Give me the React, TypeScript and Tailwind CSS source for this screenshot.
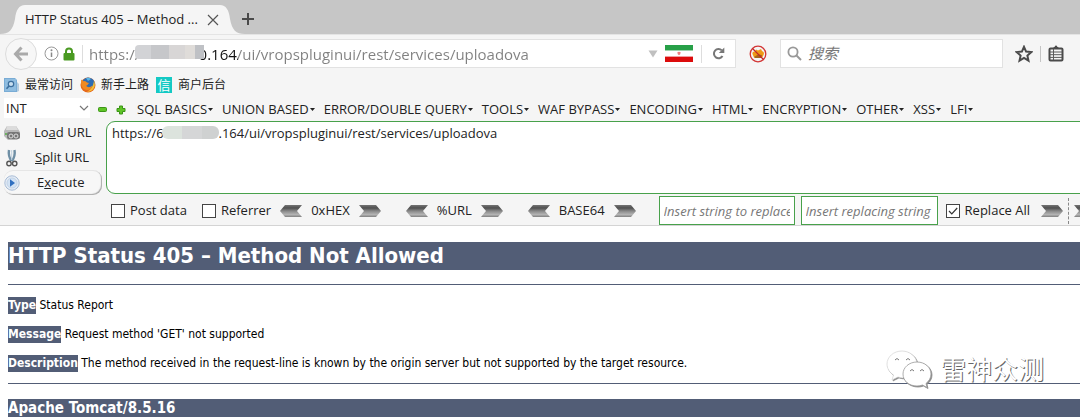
import React, { useState } from "react";

const menus = [
  "SQL BASICS",
  "UNION BASED",
  "ERROR/DOUBLE QUERY",
  "TOOLS",
  "WAF BYPASS",
  "ENCODING",
  "HTML",
  "ENCRYPTION",
  "OTHER",
  "XSS",
  "LFI",
];

function Chevron({ id, left = false }: { id: string; left?: boolean }) {
  return (
    <svg width="24" height="14" viewBox="0 0 24 14" className={left ? "-scale-x-100" : ""} aria-hidden="true">
      <defs>
        <linearGradient id={id} x1="0" y1="0" x2="0" y2="1">
          <stop offset="0" stopColor="#747474" />
          <stop offset="0.25" stopColor="#505050" />
          <stop offset="0.5" stopColor="#888" />
          <stop offset="0.8" stopColor="#b4b4b4" />
          <stop offset="1" stopColor="#808080" />
        </linearGradient>
      </defs>
      <path d="M1 1H18L23 7L18 13H1L6 7Z" fill={`url(#${id})`} />
    </svg>
  );
}

function Converter({ label, id }: { label: string; id: string }) {
  return (
    <div className="flex shrink-0 items-center">
      <button aria-label={`Decode ${label}`}>
        <Chevron id={`${id}-l`} left />
      </button>
      <span className="px-2 text-center text-[13px]">{label}</span>
      <button aria-label={`Encode ${label}`}>
        <Chevron id={`${id}-r`} />
      </button>
    </div>
  );
}

function Check({ label, checked = false }: { label: string; checked?: boolean }) {
  const [on, setOn] = useState(checked);
  return (
    <label className="flex shrink-0 items-center gap-[5px] whitespace-nowrap text-[13px]">
      <span className="relative flex size-[14px]">
        <input
          type="checkbox"
          checked={on}
          onChange={() => setOn(!on)}
          className="size-[14px] appearance-none border border-[#444] bg-white"
        />
        {on && (
          <svg viewBox="0 0 14 14" className="pointer-events-none absolute inset-0" aria-hidden="true">
            <path d="M3 7L5.8 9.8L11.2 4" fill="none" stroke="#333" strokeWidth="1.2" />
          </svg>
        )}
      </span>
      {label}
    </label>
  );
}

function TabEdge({ right = false }: { right?: boolean }) {
  return (
    <svg width="25" height="29" viewBox="0 0 25 29" className={right ? "-scale-x-100" : ""} aria-hidden="true">
      <path d="M0 29C9 29 13 25 15 14C16 5 19 0 25 0V29Z" fill="#f5f5f5" />
    </svg>
  );
}

function TabStrip() {
  return (
    <div className="flex h-[34px] items-end bg-[#c6c6c6]">
      <TabEdge />
      <div className="flex h-[29px] items-center gap-3 bg-[#f5f5f5] pr-px">
        <span className="w-[170px] text-[13px] whitespace-nowrap">HTTP Status 405 – Method ...</span>
        <button aria-label="Close tab">
          <svg width="12" height="12" viewBox="0 0 12 12" aria-hidden="true">
            <path d="M1 1L11 11M11 1L1 11" stroke="#555" strokeWidth="1.2" />
          </svg>
        </button>
      </div>
      <TabEdge right />
      <button aria-label="New tab" className="mb-2 -ml-1">
        <svg width="14" height="14" viewBox="0 0 14 14" aria-hidden="true">
          <path d="M7 1V13M1 7H13" stroke="#4a4a4a" strokeWidth="2" />
        </svg>
      </button>
    </div>
  );
}

function Flag() {
  return (
    <svg width="28" height="17" viewBox="0 0 28 17" className="shrink-0" aria-hidden="true">
      <rect width="28" height="17" fill="#fff" />
      <rect width="28" height="5" fill="#27a048" />
      <rect width="28" height="5" y="12" fill="#dc0c0c" />
      <path d="M0 5.5H28" stroke="#9fd3ad" />
      <path d="M0 11.5H28" stroke="#efa0a0" />
      <path d="M12.3 7.3Q14 6.3 15.7 7.3Q15.6 9.6 14 10.3Q12.4 9.6 12.3 7.3Z" fill="#ee7f7f" />
    </svg>
  );
}

function NavBar() {
  return (
    <div className="flex h-[38px] items-center border-t border-[#e4e4e4] pr-4 pl-[5px]">
      <button
        aria-label="Back"
        className="z-10 -mr-4 flex size-[32px] shrink-0 items-center justify-center rounded-full border border-[#dcdcdc] bg-[#f7f7f7]"
      >
        <svg width="16" height="16" viewBox="0 0 16 16" aria-hidden="true">
          <path d="M8.5 1.5L2.5 8L8.5 14.5M3 8H15" fill="none" stroke="#aaa" strokeWidth="3" />
        </svg>
      </button>
      <div className="flex h-[29px] min-w-0 flex-1 items-center border border-[#e2e2e2] bg-white pr-[10px] pl-[22px]">
        <svg width="15" height="15" viewBox="0 0 15 15" className="shrink-0" aria-hidden="true">
          <circle cx="7.5" cy="7.5" r="6.5" fill="none" stroke="#999" />
          <path d="M7.5 6.5V11" stroke="#888" strokeWidth="1.5" />
          <circle cx="7.5" cy="4.3" r="1" fill="#888" />
        </svg>
        <svg width="12" height="14" viewBox="0 0 12 14" className="ml-1 shrink-0" aria-hidden="true">
          <path d="M3 7V4.5A3 3 0 0 1 9 4.5V7" fill="none" stroke="#4a9a22" strokeWidth="2" />
          <rect x="0.5" y="6" width="11" height="7.5" rx="1" fill="#4a9a22" />
        </svg>
        <span className="ml-[7px] h-[18px] w-px shrink-0 bg-[#ddd]" />
        <div className="relative ml-[6px] min-w-0 flex-1">
          <input
            aria-label="Address"
            defaultValue="https://               0.164/ui/vropspluginui/rest/services/uploadova"
            className="block w-full bg-[linear-gradient(to_right,#808080_100px,#111_100px,#111_149px,#808080_149px)] bg-clip-text text-[15px] leading-5 text-transparent caret-black outline-none"
          />
          <span className="absolute top-[1px] left-[46px] h-[14px] w-[69px] rounded-l-sm bg-[linear-gradient(to_right,#d2d3d6_0_16px,#c6c7ca_16px_34px,#d8d6d6_34px_50px,#dfdcd9_50px_60px,#bfc1c5_60px)]" />
        </div>
        <button aria-label="Show history" className="mr-[7px]">
          <svg width="10" height="8" viewBox="0 0 10 8" aria-hidden="true">
            <path d="M0.5 0.5H9.5L5 7.5Z" fill="#c0c0c0" />
          </svg>
        </button>
        <Flag />
        <span className="ml-2 h-[18px] w-px bg-[#ddd]" />
        <button aria-label="Reload" className="ml-[10px]">
          <svg width="13" height="13" viewBox="0 0 13 13" aria-hidden="true">
            <path d="M10.5 9A4.6 4.6 0 1 1 9.8 3.4" fill="none" stroke="#777" strokeWidth="2" />
            <path d="M12.3 0.5V6H6.8Z" fill="#777" />
          </svg>
        </button>
      </div>
      <button aria-label="Blocked item" className="mx-[13px] shrink-0">
        <svg width="18" height="18" viewBox="0 0 18 18" aria-hidden="true">
          <path d="M3.5 9Q3 6 6 6.5L7 4.5L9 5.5L12 4L13 6Q16 7 14.5 10Q14 13 10 13L5 12.5Z" fill="#ef9a16" />
          <path d="M5 12L9 9.5L13 10L12 13H6Z" fill="#a8651b" />
          <circle cx="9" cy="9" r="7.8" fill="none" stroke="#d23434" strokeWidth="1.3" />
          <path d="M3.5 3.5L14.5 14.5" stroke="#c22828" strokeWidth="1.3" />
        </svg>
      </button>
      <label className="flex h-[29px] w-[223px] shrink-0 items-center gap-[6px] border border-[#e2e2e2] bg-white px-[6px]">
        <svg width="15" height="15" viewBox="0 0 15 15" className="shrink-0" aria-hidden="true">
          <circle cx="6" cy="6" r="4.6" fill="none" stroke="#999" strokeWidth="1.8" />
          <path d="M9.5 9.5L14 14" stroke="#999" strokeWidth="2" />
        </svg>
        <input
          aria-label="搜索"
          placeholder="搜索"
          className="w-full min-w-0 bg-transparent text-[15px] italic outline-none placeholder:text-[#777]"
        />
      </label>
      <button aria-label="Bookmark this page" className="ml-3 shrink-0">
        <svg width="18" height="18" viewBox="0 0 18 18" aria-hidden="true">
          <path
            d="M9 1.8L11.1 6.6L16.3 7.1L12.4 10.6L13.5 15.7L9 13L4.5 15.7L5.6 10.6L1.7 7.1L6.9 6.6Z"
            fill="none"
            stroke="#4a4a4a"
            strokeWidth="2"
          />
        </svg>
      </button>
      <span className="mx-[7px] h-[16px] w-px shrink-0 bg-[#c4c4c4]" />
      <button aria-label="Bookmarks list" className="shrink-0">
        <svg width="16" height="17" viewBox="0 0 16 17" aria-hidden="true">
          <rect x="1.5" y="3.5" width="13" height="12" rx="1" fill="#f5f5f5" stroke="#4a4a4a" strokeWidth="2" />
          <path d="M4.5 4L6 2H6.5Q8 -0.8 9.5 2H10L11.5 4Z" fill="#4a4a4a" />
          <path d="M5.5 4V15M2 7H14M2 9.7H14M2 12.4H14" stroke="#5a5a5a" />
        </svg>
      </button>
    </div>
  );
}

function BookmarksBar() {
  return (
    <nav className="flex h-[25px] items-center gap-[7px] pl-1 text-[12px]">
      <a href="#most-visited" className="flex items-center gap-[6px]">
        <svg width="15" height="16" viewBox="0 0 15 16" aria-hidden="true">
          <path d="M0 1H11L13 3V15H0Z" fill="#79acd5" />
          <path d="M13 5L15 7V14L13 15Z" fill="#b5cde0" />
          <rect x="1" y="2" width="11" height="12" fill="#8fbde0" />
          <circle cx="7" cy="7" r="2.7" fill="#c9e0f1" stroke="#3c6f9d" strokeWidth="1.2" />
          <path d="M5 9L2.5 11.8" stroke="#3c6f9d" strokeWidth="1.6" />
        </svg>
        最常访问
      </a>
      <a href="#getting-started" className="flex items-center gap-[5px]">
        <svg width="16" height="16" viewBox="0 0 16 16" aria-hidden="true">
          <circle cx="8" cy="8" r="7.5" fill="#e66a1c" />
          <path d="M3 3Q7 -1.5 12.5 2Q16 5.5 14 9Q11 12 7 10.5L4 6Z" fill="#2e6db4" />
          <path d="M6 1Q9 0 11 2L8 4Z" fill="#58b5e4" />
          <path d="M1 2.5L3.2 4.2Q5.3 3.8 7 5.5L9 6L7.5 8L6 9Q9 11.5 12.5 8.5Q11.5 13 7 13Q2 12.5 1.2 7Z" fill="#f08a22" />
          <path d="M14 4Q15.8 8 13.6 11.5Q11 15 7 14.8Q12.5 13 14 4Z" fill="#f5c338" />
        </svg>
        新手上路
      </a>
      <a href="#merchant" className="flex items-center gap-[6px]">
        <span className="flex size-4 items-center justify-center bg-[#14c9c4] text-[13px] leading-4 text-white">信</span>
        商户后台
      </a>
    </nav>
  );
}

function SidePanel() {
  return (
    <div className="flex w-[106px] shrink-0 flex-col pl-1 text-[13px]">
      <div className="relative w-[86px]">
        <select aria-label="Mode" className="block h-[20px] w-full appearance-none bg-white pl-[2px] leading-[20px]">
          <option>INT</option>
        </select>
        <svg
          width="10"
          height="6"
          viewBox="0 0 10 6"
          className="pointer-events-none absolute top-[7px] right-px"
          aria-hidden="true"
        >
          <path d="M1 1L5 5L9 1" fill="none" stroke="#777" strokeWidth="1.2" />
        </svg>
      </div>
      <button className="mt-[2px] flex h-[25px] items-center">
        <svg width="17" height="16" viewBox="0 0 17 16" aria-hidden="true">
          <path d="M3 1H12L16 7V12L13 15H4L0 11V6Z" fill="#b9b9b9" />
          <path d="M3 1H12L14 5H2Z" fill="#dcdcdc" />
          <rect x="3" y="7" width="13" height="7" rx="2" fill="#777" />
          <circle cx="7" cy="11" r="2" fill="none" stroke="#ddd" />
          <circle cx="12" cy="11" r="2" fill="none" stroke="#ddd" />
          <circle cx="2" cy="9" r="1" fill="#54ad45" />
        </svg>
        <span className="ml-[13px] whitespace-nowrap">
          Lo<u>a</u>d URL
        </span>
      </button>
      <button className="flex h-[25px] items-center">
        <svg width="16" height="18" viewBox="0 0 16 18" aria-hidden="true">
          <path d="M5 1Q4 7 7.5 12M10.5 1Q11.5 7 8 12" fill="none" stroke="#6f8fa5" strokeWidth="2.4" />
          <path d="M7.7 1V11" stroke="#bfd1de" />
          <circle cx="5" cy="14.5" r="2.2" fill="none" stroke="#555" strokeWidth="1.4" />
          <circle cx="10.7" cy="14.5" r="2.2" fill="none" stroke="#555" strokeWidth="1.4" />
        </svg>
        <span className="ml-[15px] whitespace-nowrap">
          <u>S</u>plit URL
        </span>
      </button>
      <button className="mr-1 flex h-[25px] items-center rounded-[9px] bg-[#f7f7f7] shadow-[inset_-1px_-1px_1px_#aaa,inset_0_1px_0_#e6e6e6]">
        <svg width="16" height="16" viewBox="0 0 16 16" aria-hidden="true">
          <circle cx="8" cy="8" r="7.2" fill="#e5ecf5" stroke="#a9bdd6" />
          <circle cx="8" cy="8" r="5" fill="#d2e2f4" stroke="#c2d3e7" />
          <path d="M6 4.2L11 8L6 11.8Z" fill="#2f6fc0" />
        </svg>
        <span className="ml-[17px]">
          E<u>x</u>ecute
        </span>
      </button>
    </div>
  );
}

function HackBar() {
  return (
    <section className="flex h-[129px] overflow-hidden border-b border-[#d4d4d4] pt-px">
      <SidePanel />
      <div className="flex min-w-0 flex-1 flex-col">
        <div className="flex h-[23px] shrink-0 items-center gap-[9px] text-[13px]">
          <div className="-ml-2 mr-[2px] flex w-[28px] shrink-0 items-center justify-between">
            <button aria-label="Remove">
              <svg width="9" height="5" viewBox="0 0 9 5" aria-hidden="true">
                <rect x="0.5" y="0.5" width="8" height="4" rx="1" fill="#5ec426" stroke="#3b9416" />
              </svg>
            </button>
            <button aria-label="Add">
              <svg width="10" height="10" viewBox="0 0 10 10" aria-hidden="true">
                <path d="M3.5 1H6.5V3.5H9V6.5H6.5V9H3.5V6.5H1V3.5H3.5Z" fill="#5ec426" stroke="#3b9416" />
              </svg>
            </button>
          </div>
          {menus.map((m) => (
            <button key={m} className="flex items-center gap-px whitespace-nowrap">
              {m}
              <svg width="5" height="3" viewBox="0 0 5 3" aria-hidden="true">
                <path d="M0 0H5L2.5 3Z" fill="#222" />
              </svg>
            </button>
          ))}
        </div>
        <div className="relative shrink-0">
          <textarea
            aria-label="Request URL"
            defaultValue="https://62              .164/ui/vropspluginui/rest/services/uploadova"
            className="-mr-4 block h-[73px] w-[calc(100%+16px)] resize-none rounded-[9px] border border-[#48a14b] bg-white px-[5px] py-[2px] text-[13px] leading-[18px] outline-none"
          />
          <span className="absolute top-[5px] left-[56px] h-[13px] w-[57px] rounded-md bg-[linear-gradient(to_right,#dce3dd_0_20px,#d5d6d7_20px_40px,#cfd1d1_40px)]" />
        </div>
        <div className="flex flex-1 items-center pt-[2px] pl-[5px] whitespace-nowrap">
          <div className="flex shrink-0 items-center gap-[15px]">
            <Check label="Post data" />
            <Check label="Referrer" />
          </div>
          <div className="ml-2 flex shrink-0 items-center gap-[23px]">
            <Converter label="0xHEX" id="hex" />
            <Converter label="%URL" id="url" />
            <Converter label="BASE64" id="b64" />
          </div>
          <div className="ml-[22px] flex shrink-0 gap-[6px]">
            <input
              aria-label="String to replace"
              placeholder="Insert string to replace"
              className="h-[29px] w-[136px] border border-[#48a14b] bg-white px-1 text-[13px] italic outline-none placeholder:text-[#777]"
            />
            <input
              aria-label="Replacing string"
              placeholder="Insert replacing string"
              className="h-[29px] w-[137px] border border-[#48a14b] bg-white px-1 text-[13px] italic outline-none placeholder:text-[#777]"
            />
          </div>
          <div className="ml-2 flex shrink-0 items-center gap-[10px]">
            <Check label="Replace All" checked />
            <button aria-label="Replace">
              <Chevron id="rep" />
            </button>
          </div>
          <span className="mx-1 h-[26px] shrink-0 border-l border-dashed border-[#888]" />
          <button aria-label="More" className="shrink-0">
            <Chevron id="more" />
          </button>
        </div>
      </div>
    </section>
  );
}

function Field({ name, children }: { name: string; children: React.ReactNode }) {
  return (
    <p className="mt-3 h-[17px] text-[12px] leading-[17px]">
      <b className="inline-block bg-[#525d76] text-white">{name}</b> {children}
    </p>
  );
}

function Watermark() {
  return (
    <div className="absolute top-[124px] right-[36px] flex items-center gap-[6px]">
      <svg width="48" height="40" viewBox="0 0 48 40" className="drop-shadow-[1px_1px_0_#888]" aria-hidden="true">
        <path
          d="M16 1C7.5 1 1 7 1 14C1 18.5 3.5 22.5 7.5 25L6 30L12 27Q16 28.5 20 27.5C27 26 31 20 31 14C31 7 24 1 16 1Z"
          fill="#fff"
          stroke="#ccc"
          strokeWidth="0.6"
        />
        <path
          d="M31 12C23 12 17 17.5 17 24C17 31 23 36 31 36Q34 36 36.5 35L41 37.5L40 33.5C43 31 45 28 45 24C45 17.5 39 12 31 12Z"
          fill="#fff"
          stroke="#999"
          strokeWidth="0.8"
        />
        <path d="M9 10Q11 7 13 10M20 10Q22 7 24 10M24 21Q26 18 28 21M34 21Q36 18 38 21" fill="none" stroke="#777" />
      </svg>
      <span className="text-[26px] leading-8 text-white [text-shadow:1px_1px_0_#666]">雷神众测</span>
    </div>
  );
}

export default function App() {
  return (
    <div className="overflow-hidden bg-white font-['Open_Sans','Noto_Sans_CJK_SC',sans-serif] text-[#222]">
      <header className="bg-[#f5f5f5]">
        <TabStrip />
        <NavBar />
        <BookmarksBar />
        <HackBar />
      </header>
      <main className="relative pt-4 pl-2 font-['DejaVu_Sans_Condensed','DejaVu_Sans','Noto_Sans_CJK_SC',sans-serif] text-black">
        <h1 className="h-[28px] bg-[#525d76] text-[22px] leading-[28px] font-bold text-white">
          HTTP Status 405 – Method Not Allowed
        </h1>
        <hr className="mt-[14px] mb-3 border-[#525d76]" />
        <Field name="Type">Status Report</Field>
        <Field name="Message">Request method 'GET' not supported</Field>
        <Field name="Description">
          The method received in the request-line is known by the origin server but not supported by the target resource.
        </Field>
        <hr className="mt-[11px] mb-[15px] border-[#525d76]" />
        <h3 className="h-[18px] bg-[#525d76] text-[15px] leading-[18px] font-bold text-white">Apache Tomcat/8.5.16</h3>
        <Watermark />
      </main>
    </div>
  );
}
